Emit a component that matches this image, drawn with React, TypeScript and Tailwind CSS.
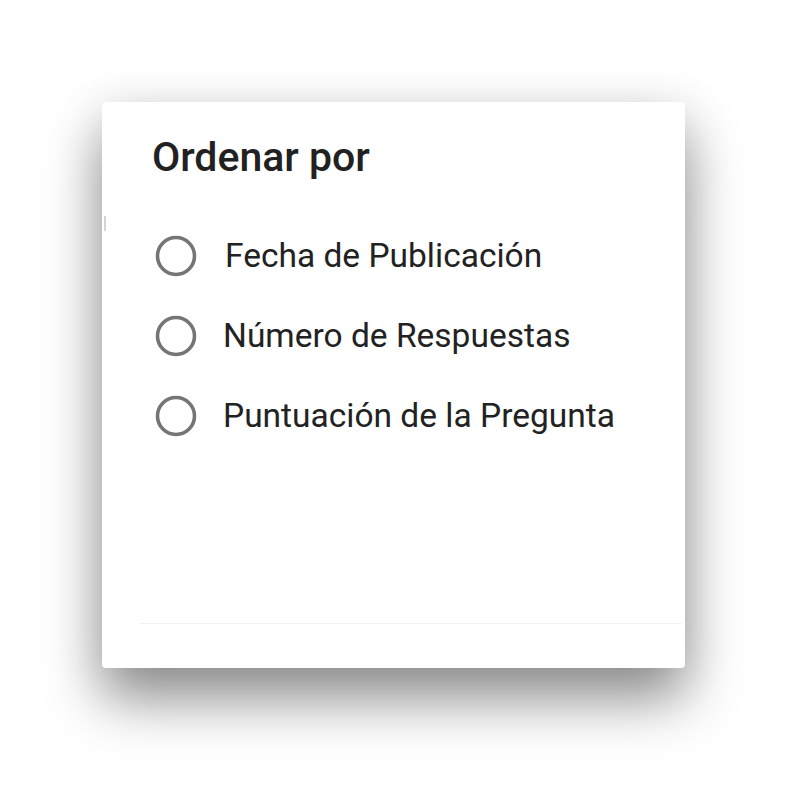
import React from 'react'

const options = ['Fecha de Publicación', 'Número de Respuestas', 'Puntuación de la Pregunta']

function Radio() {
  return (
    <svg width="42" height="42" viewBox="0 0 42 42" className="shrink-0">
      <circle cx="21" cy="21" r="18.5" fill="none" stroke="#757575" strokeWidth="3.6" />
    </svg>
  )
}

export default function App() {
  return (
    <div className="min-h-[790px] w-[785px] bg-white pt-[102px] pl-[102px]" style={{ fontFamily: 'Roboto, "Noto Sans", sans-serif' }}>
      <div className="relative flex h-[566px] w-[583px] flex-col rounded-[4px] bg-white shadow-[0_32px_56px_rgba(0,0,0,0.42),0_6px_50px_rgba(0,0,0,0.1)]">
        {/* little scrollbar ticks on the edges */}
        <div className="absolute left-[2px] top-[114px] h-[15px] w-[2px] bg-[#d4d4d4]" />
        <div className="absolute left-[584px] top-[114px] z-10 h-[15px] w-[3px] bg-[#c4c4c4]" />

        <h2 className="pl-[50px] pt-[30px] text-[41px] font-medium leading-[50px] text-[#212121]">Ordenar por</h2>

        <div className="mt-[53px] flex flex-col gap-[38px] pl-[53px]">
          {options.map((o, i) => (
            <div key={o} className="flex h-[42px] items-center">
              <Radio />
              <span className={`text-[33.5px] leading-[42px] text-[#222] ${i === 0 ? 'ml-[28px]' : 'ml-[26px]'}`}>{o}</span>
            </div>
          ))}
        </div>

        <div className="flex-1" />
        <div className="ml-[38px] mr-[3px] h-px bg-[#f3f3f3]" />
        <div className="h-[44px]" />
      </div>
    </div>
  )
}
